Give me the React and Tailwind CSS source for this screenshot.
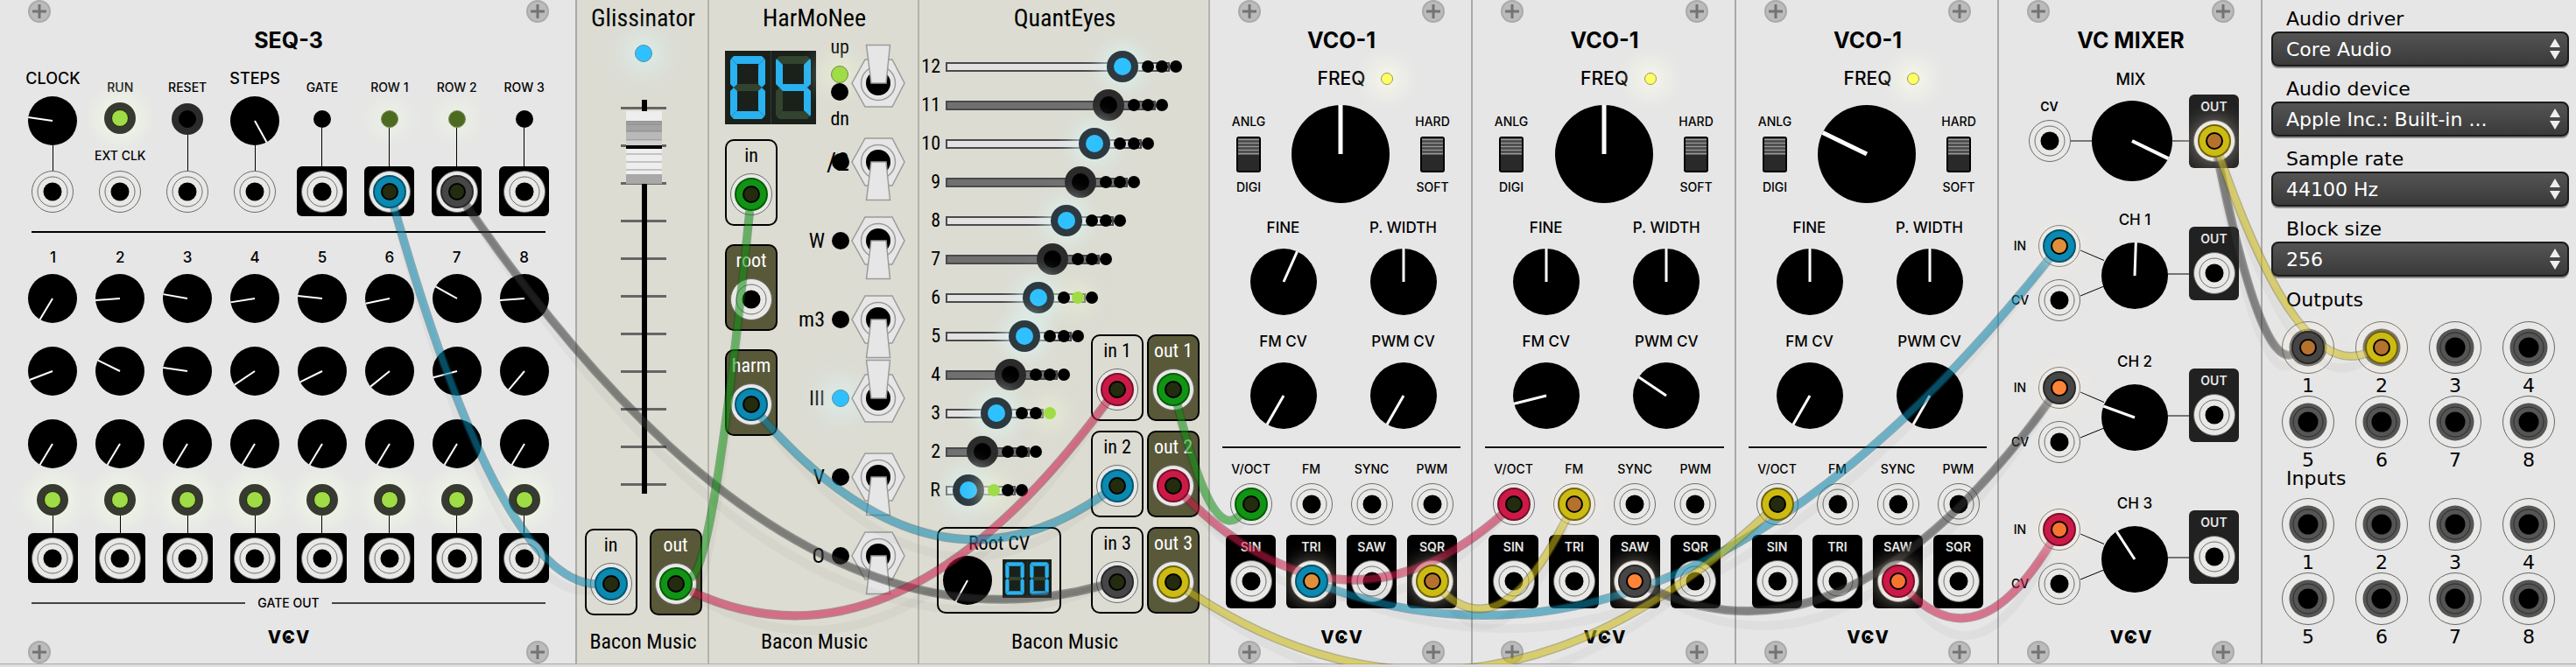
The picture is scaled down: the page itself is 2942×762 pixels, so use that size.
import React from 'react';

const NARROW = "font-['Liberation_Sans_Narrow','Roboto_Condensed','Liberation_Sans',sans-serif]";

const COLORS = {
  blue: ['#0b89b0', '#055570'],
  green: ['#119414', '#075c08'],
  pink: ['#cc1a47', '#7a0f2b'],
  yellow: ['#cdbb13', '#6f650a'],
  gray: ['#474646', '#2a2929'],
};

const CABLES = [
  ['blue', 445, 219, 698, 668],
  ['gray', 522, 219, 1276, 664],
  ['green', 773, 668, 858, 223],
  ['pink', 773, 668, 1276, 443],
  ['blue', 858, 463, 1276, 554],
  ['green', 1340, 443, 1428, 576],
  ['pink', 1340, 554, 1729, 576],
  ['blue', 1496, 664, 2352, 281],
  ['yellow', 1340, 664, 2030, 576],
  ['yellow', 1635, 664, 1797, 576],
  ['gray', 1867, 664, 2352, 442],
  ['pink', 2168, 664, 2352, 604],
  ['gray', 2529, 161, 2635, 397],
  ['yellow', 2529, 161, 2719, 397],
];

// A cable hangs from both plugs; longer cables sag further.
function cablePath([, x1, y1, x2, y2], extra) {
  const dist = Math.hypot(x2 - x1, y2 - y1);
  const cx = (x1 + x2) / 2;
  const cy = (y1 + y2) / 2 + 65 + 0.3 * dist + extra;
  const start = (x, y) => {
    const d = Math.hypot(cx - x, cy - y);
    return [x + ((cx - x) / d) * 18, y + ((cy - y) / d) * 18];
  };
  const [ax, ay] = start(x1, y1);
  const [bx, by] = start(x2, y2);
  return `M${ax} ${ay}Q${cx} ${cy} ${bx} ${by}`;
}

function Cables() {
  return (
    <svg
      className="pointer-events-none absolute inset-0 z-10 h-full w-full"
      viewBox="0 0 2942 759"
      preserveAspectRatio="none"
      fill="none"
      aria-hidden="true"
    >
      {CABLES.map((c, i) => (
        <g key={i}>
          <path d={cablePath(c, 40)} stroke="#000" strokeOpacity="0.03" strokeWidth="10" />
          <g opacity="0.56">
            <path d={cablePath(c, 0)} stroke={COLORS[c[0]][1]} strokeOpacity="0.75" strokeWidth="10" />
            <path d={cablePath(c, 0)} stroke={c[0] === 'gray' ? '#333' : COLORS[c[0]][0]} strokeWidth="7" />
          </g>
        </g>
      ))}
    </svg>
  );
}

function Plug({ color, core = '#242c10' }) {
  const [fill, edge] = COLORS[color];
  const hot = core !== '#242c10';
  return (
    <span
      className={
        'absolute inset-0 z-20 m-auto grid size-[38px] place-items-center rounded-full ' +
        (hot ? 'shadow-[0_0_20px_8px_rgba(255,240,220,0.35)]' : '')
      }
    >
      <svg className="size-[38px]" viewBox="0 0 38 38" aria-hidden="true">
        <circle cx="19" cy="19" r="18" fill={fill} stroke={edge} strokeWidth="2" />
        <circle cx="19" cy="19" r="9" fill={core} stroke="#000" strokeWidth="2" />
      </svg>
    </span>
  );
}

function Jack({ plug, core }) {
  return (
    <span className="relative block size-12 shrink-0">
      <svg className="size-12" viewBox="0 0 48 48" aria-hidden="true">
        <circle cx="24" cy="24" r="23.5" fill="#e8e8e6" stroke="#6c6c6c" />
        <circle cx="24" cy="24" r="17" fill="none" stroke="#6c6c6c" />
        <circle cx="24" cy="24" r="10.5" fill="#000" />
      </svg>
      {plug && <Plug color={plug} core={core} />}
    </span>
  );
}

function AudioJack({ plug, core }) {
  return (
    <span className="relative block size-[60px] shrink-0">
      <svg className="size-[60px]" viewBox="0 0 60 60" aria-hidden="true">
        <circle cx="30" cy="30" r="29.5" fill="#e8e8e7" stroke="#666" />
        <circle cx="30" cy="30" r="21.5" fill="#555" />
        <circle cx="30" cy="30" r="17" fill="none" stroke="#2a2a2a" />
        <circle cx="30" cy="30" r="11.5" fill="#000" />
      </svg>
      {plug && <Plug color={plug} core={core} />}
    </span>
  );
}

function Knob({ size, angle, label, width = 2 }) {
  const r = size / 2;
  return (
    <label className="relative block shrink-0 rounded-full">
      <svg width={size} height={size} viewBox={`0 0 ${size} ${size}`} aria-hidden="true">
        <circle cx={r} cy={r} r={r} fill="#000" />
        <line x1={r} y1={r} x2={r} y2="0" stroke="#fff" strokeWidth={width} transform={`rotate(${angle} ${r} ${r})`} />
      </svg>
      <input
        type="range"
        min="0"
        max="360"
        defaultValue={angle}
        aria-label={label}
        className="absolute inset-0 h-full w-full opacity-0"
      />
    </label>
  );
}

function PushButton({ on, label }) {
  return (
    <button
      aria-label={label}
      className={
        'grid size-9 shrink-0 place-items-center rounded-full ' +
        (on ? 'bg-[#373a30] shadow-[0_0_24px_10px_rgba(242,250,228,0.75)]' : 'bg-[#2b2b2b]')
      }
    >
      <span className={'size-5 rounded-full border ' + (on ? 'border-[#20260f] bg-[#9fdc45]' : 'border-black bg-black')} />
    </button>
  );
}

function Screw() {
  return (
    <svg className="size-[26px]" viewBox="0 0 26 26" aria-hidden="true">
      <circle cx="13" cy="13" r="12" fill="#bbb" stroke="#aaa" strokeWidth="2" />
      <path d="M13 5v16M5 13h16" stroke="#737373" strokeWidth="3" />
    </svg>
  );
}

function Logo() {
  return (
    <span className="flex h-5 items-center gap-px text-[20px] leading-5 font-extrabold">
      <span>V</span>
      <span className="relative">
        C
        <span className="absolute inset-0 m-auto size-[5px] rounded-full bg-black" />
      </span>
      <span>V</span>
    </span>
  );
}

function VcvModule({ title, children }) {
  return (
    <section className="flex flex-col bg-[#e6e6e6] font-['Inter',sans-serif] text-black shadow-[inset_-2px_-1px_0_#a9a9a9]">
      <div className="flex justify-between px-8">
        <Screw />
        <Screw />
      </div>
      <h2 className="h-10 text-center text-[25px] leading-10 font-bold">{title}</h2>
      {children}
      <div className="mt-auto mb-px flex h-10 items-start justify-between px-8">
        <span className="self-end"><Screw /></span>
        <Logo />
        <span className="self-end"><Screw /></span>
      </div>
    </section>
  );
}

function JackBox({ label, tone = 'bg-black text-[#e6e6e6]', plug, core }) {
  return (
    <div className={'flex h-[84px] w-[57px] shrink-0 flex-col items-center gap-[7px] rounded-md pt-1.5 ' + tone}>
      <span className="text-sm leading-4 font-semibold">{label}</span>
      <Jack plug={plug} core={core} />
    </div>
  );
}

function SquareJack({ plug }) {
  return (
    <div className="grid size-[57px] place-items-center rounded-md bg-black">
      <Jack plug={plug} />
    </div>
  );
}

const SMALL = 'text-sm leading-5 font-medium whitespace-nowrap';
const LARGE = 'text-[18px] leading-5 font-medium whitespace-nowrap';
const WIRE = 'w-px flex-1 bg-black';

function Seq3() {
  const rows = [
    [211, 266, 280, 261, 276, 258, 299, 266],
    [249, 296, 278, 236, 244, 231, 255, 220],
    [211, 211, 211, 211, 211, 211, 211, 211],
  ];
  const outs = [
    ['GATE', false],
    ['ROW 1', true, 'blue'],
    ['ROW 2', true, 'gray'],
    ['ROW 3', false],
  ];
  return (
    <VcvModule title="SEQ-3">
      <div className="mt-3.5 grid h-[167px] grid-cols-8 px-[22px]">
        <div className="flex flex-col items-center pb-1">
          <span className={LARGE}>CLOCK</span>
          <span className="mt-2.5"><Knob size={56} angle={278} label="Clock" /></span>
          <span className={WIRE} />
          <Jack />
        </div>
        <div className="flex flex-col items-center justify-between pt-2.5 pb-1">
          <span className={SMALL}>RUN</span>
          <PushButton on label="Run" />
          <span className={SMALL + ' mt-2'}>EXT CLK</span>
          <Jack />
        </div>
        <div className="flex flex-col items-center pt-2.5 pb-1">
          <span className={SMALL}>RESET</span>
          <span className="mt-2"><PushButton label="Reset" /></span>
          <span className={WIRE} />
          <Jack />
        </div>
        <div className="flex flex-col items-center pb-1">
          <span className={LARGE}>STEPS</span>
          <span className="mt-2.5"><Knob size={56} angle={151} label="Steps" /></span>
          <span className={WIRE} />
          <Jack />
        </div>
        {outs.map(([name, on, plug]) => (
          <div key={name} className="flex flex-col items-center pt-2.5">
            <span className={SMALL}>{name}</span>
            <span
              className={
                'mt-4 size-5 rounded-full ' +
                (on ? 'border border-[#7b8a5a] bg-[#4c6b21] shadow-[0_0_24px_12px_rgba(240,246,228,0.6)]' : 'bg-black')
              }
            />
            <span className={WIRE} />
            <SquareJack plug={plug} />
          </div>
        ))}
      </div>
      <div className="mx-9 mt-[17px] h-0.5 bg-black" />
      <div className="mt-4 grid grid-cols-8 px-[22px] text-center text-[17px] leading-6 font-medium">
        {[1, 2, 3, 4, 5, 6, 7, 8].map((n) => <span key={n}>{n}</span>)}
      </div>
      <div className="mt-[7px] flex flex-col gap-[27px]">
        {rows.map((row, r) => (
          <div key={r} className="grid grid-cols-8 justify-items-center px-[22px]">
            {row.map((a, i) => <Knob key={i} size={56} angle={a} label={`Row ${r + 1} step ${i + 1}`} />)}
          </div>
        ))}
      </div>
      <div className="mt-[18px] grid grid-cols-8 px-[22px]">
        {[1, 2, 3, 4, 5, 6, 7, 8].map((n) => (
          <div key={n} className="flex h-[113px] flex-col items-center">
            <PushButton on label={`Gate ${n}`} />
            <span className={WIRE} />
            <SquareJack />
          </div>
        ))}
      </div>
      <div className="mx-9 mt-[13px] mb-[19px] flex items-center gap-3.5">
        <span className="h-0.5 flex-1 bg-[#444]" />
        <span className={SMALL}>GATE OUT</span>
        <span className="h-0.5 flex-1 bg-[#444]" />
      </div>
    </VcvModule>
  );
}

function BaconModule({ title, children }) {
  return (
    <section className={'flex flex-col bg-[#dcdcd3] text-black shadow-[inset_-2px_-1px_0_#b3b3ab] ' + NARROW}>
      <h2 className="h-[42px] text-center text-[28px] leading-[42px]">{title}</h2>
      {children}
      <footer className="mt-auto h-[42px] text-center text-2xl leading-8">Bacon Music</footer>
    </section>
  );
}

function BaconJack({ label, dark, plug }) {
  return (
    <div
      className={
        'flex h-[99px] w-[60px] shrink-0 flex-col items-center gap-1.5 rounded-[10px] border-2 border-black pt-[3px] ' +
        (dark ? 'bg-[#59593a] text-white' : '')
      }
    >
      <span className="text-[22px] leading-7 whitespace-nowrap">{label}</span>
      <Jack plug={plug} />
    </div>
  );
}

function Glissinator() {
  return (
    <BaconModule title="Glissinator">
      <div className="flex flex-col items-center pt-[9px]">
        <span className="size-5 rounded-full border border-[#5b8ea3] bg-[#2fc1ff] shadow-[0_0_28px_12px_rgba(220,243,240,0.8)]" />
        <label className="relative mt-[43px] block">
          <svg width="52" height="450" viewBox="0 0 52 450" aria-hidden="true">
            {Array.from({ length: 11 }, (_, i) => (
              <rect key={i} x="0" y={8 + i * 43} width="52" height="3" fill="#666" />
            ))}
            <rect x="24" y="0" width="6" height="450" fill="#000" />
            <rect x="6" y="13" width="41" height="83" fill="#eee" />
            <rect x="6" y="24" width="41" height="12" fill="#a3a3a3" />
            <rect x="6" y="36" width="41" height="10" fill="#b9b9b9" />
            <path d="M6 25h41M6 28h41M6 36h41M6 46h41" stroke="#8a8a8a" />
            <rect x="6" y="47" width="41" height="5" fill="#d0d0d0" />
            <rect x="6" y="52" width="41" height="4" fill="#000" />
            <path d="M6 62h41M6 71h41M6 80h41" stroke="#999" />
            <rect x="6" y="85" width="41" height="11" fill="#a8a8a8" />
          </svg>
          <input
            type="range"
            min="0"
            max="100"
            defaultValue="90"
            aria-label="Glide"
            className="absolute inset-0 h-full w-full opacity-0"
          />
        </label>
        <div className="mt-10 flex gap-3.5">
          <BaconJack label="in" plug="blue" />
          <BaconJack label="out" dark plug="green" />
        </div>
      </div>
    </BaconModule>
  );
}

const SEGMENTS = {
  a: '10,6 42,6 45,9 39,15 13,15 7,9',
  b: '46,11 45,9 38,16 38,39 42,42 46,38',
  c: '46,46 42,42 38,45 38,68 45,75 46,73',
  d: '10,78 42,78 45,75 39,69 13,69 7,75',
  e: '6,46 10,42 14,45 14,68 7,75 6,73',
  f: '6,11 7,9 14,16 14,39 10,42 6,38',
  g: '10,42 14,38 38,38 42,42 38,46 14,46',
};
const LIT = { 0: 'abcdef', 4: 'bcfg' };

function Display({ value, className }) {
  return (
    <svg className={'shrink-0 ' + className} viewBox="0 0 104 84" preserveAspectRatio="none" role="img" aria-label={value}>
      <rect width="104" height="84" fill="#1a211b" />
      <path d="M52.5 0v84" stroke="#333a33" />
      {value.split('').map((digit, i) => (
        <g key={i} transform={`translate(${i * 52} 0)`}>
          {Object.entries(SEGMENTS).map(([name, points]) => (
            <polygon key={name} points={points} fill={LIT[digit].includes(name) ? '#29b1f0' : '#32432f'} />
          ))}
        </g>
      ))}
    </svg>
  );
}

function Toggle({ up, label }) {
  return (
    <label className="relative block shrink-0">
      <svg width="62" height="90" viewBox="0 0 62 90" aria-hidden="true">
        <g fill="#e6e6e6" stroke="#9b9b9b" strokeWidth="1.5">
          <polygon points="1,45 16,18 47,18 61,45 47,72 16,72" />
          <circle cx="31" cy="45" r="19.5" />
          <circle cx="31" cy="45" r="14" fill="#000" stroke="none" />
          <polygon points={up ? '17.5,1.5 44.5,1.5 40,45 23,45' : '23,45 40,45 44.5,88.5 17.5,88.5'} />
        </g>
      </svg>
      <input type="checkbox" defaultChecked={up} aria-label={label} className="absolute inset-0 h-full w-full opacity-0" />
    </label>
  );
}

function HarMoNee() {
  const rows = [['/2'], ['W'], ['m3'], ['III', true], ['V'], ['O']];
  return (
    <BaconModule title="HarMoNee">
      <div className="flex pt-2 pr-4 pl-[18px]">
        <div className="flex w-[60px] shrink-0 flex-col pt-2">
          <Display value="04" className="h-[84px] w-[104px]" />
          <div className="mt-[17px] flex flex-col gap-[21px]">
            <BaconJack label="in" plug="green" />
            <BaconJack label="root" dark />
            <BaconJack label="harm" dark plug="blue" />
          </div>
        </div>
        <div className="flex flex-1 flex-col text-[22px]">
          <div className="flex h-[90px] items-center justify-end gap-0.5">
            <div className="flex flex-col items-center">
              <span className="leading-[26px]">up</span>
              <span className="mt-2 size-5 rounded-full border border-[#6f8a4a] bg-[#9fdc45] shadow-[0_0_24px_12px_rgba(238,243,212,0.6)]" />
              <span className="size-5 rounded-full bg-black" />
              <span className="mt-2 leading-[26px]">dn</span>
            </div>
            <Toggle up label="Up or down" />
          </div>
          {rows.map(([name, on]) => (
            <div key={name} className="flex h-[90px] items-center justify-end gap-0.5">
              <span className={name === '/2' ? '-mr-[22px] text-3xl' : 'mr-1.5 text-2xl'}>{name}</span>
              <span
                className={
                  'size-5 rounded-full ' +
                  (on ? 'border border-[#5b8ea3] bg-[#2fc1ff] shadow-[0_0_28px_12px_rgba(220,243,240,0.8)]' : 'bg-black')
                }
              />
              <Toggle up={on} label={name} />
            </div>
          ))}
        </div>
      </div>
    </BaconModule>
  );
}

function QuantEyes() {
  const names = ['12', '11', '10', '9', '8', '7', '6', '5', '4', '3', '2', 'R'];
  const lit = { 12: 1, 10: 1, 8: 1, 6: 1, 5: 1, 3: 1, R: 1 };
  const green = { 6: 1, 3: 2, R: 0 };
  return (
    <BaconModule title="QuantEyes">
      <div className="grid pt-3">
        <div className="col-start-1 row-start-1 flex flex-col">
          {names.map((name, i) => (
            <div key={name} className="flex h-11 items-center">
              <span className="w-6 text-right text-[22px] leading-8">{name}</span>
              <div
                className={
                  'ml-1.5 flex h-[11px] items-center justify-end border-2 border-[#4a4a4c] ' +
                  (lit[name] ? 'bg-[#e2e2e2]' : 'bg-[#707070]')
                }
                style={{ width: 256 - i * 16 }}
              >
                <button
                  aria-label={`Note ${name}`}
                  className={
                    'grid size-9 shrink-0 place-items-center rounded-full ' +
                    (lit[name] ? 'bg-[#2d3940] shadow-[0_0_20px_8px_rgba(220,243,240,0.7)]' : 'bg-[#2b2b2b]')
                  }
                >
                  <span className={'size-5 rounded-full ' + (lit[name] ? 'bg-[#2fc1ff]' : 'bg-black')} />
                </button>
                <div className="-mr-4 ml-1 flex gap-0.5">
                  {[0, 1, 2].map((d) => (
                    <span
                      key={d}
                      className={
                        'size-3.5 rounded-full ' +
                        (green[name] === d
                          ? 'bg-[#9fdc45] shadow-[0_0_20px_12px_rgba(238,243,212,0.5)]'
                          : 'relative bg-black')
                      }
                    />
                  ))}
                </div>
              </div>
            </div>
          ))}
          <div className="mt-5 ml-5 flex h-[99px] w-[142px] flex-col rounded-[10px] border-2 border-black">
            <span className="pt-[3px] text-center text-[22px] leading-7">Root CV</span>
            <div className="flex items-center gap-3 pl-[5px]">
              <Knob size={56} angle={209} label="Root CV" />
              <Display value="00" className="-mt-1 h-11 w-14" />
            </div>
          </div>
        </div>
        <div className="col-start-1 row-start-1 grid grid-cols-2 gap-x-1 gap-y-[11px] self-end justify-self-end pr-3">
          <BaconJack label="in 1" plug="pink" />
          <BaconJack label="out 1" dark plug="green" />
          <BaconJack label="in 2" plug="blue" />
          <BaconJack label="out 2" dark plug="pink" />
          <BaconJack label="in 3" plug="gray" />
          <BaconJack label="out 3" dark plug="yellow" />
        </div>
      </div>
    </BaconModule>
  );
}

function SlideSwitch({ top, bottom }) {
  return (
    <label className="relative flex w-[50px] flex-col items-center gap-[9px] text-sm leading-4 font-medium">
      <span>{top}</span>
      <svg width="28" height="41" viewBox="0 0 28 41" aria-hidden="true">
        <rect width="28" height="41" rx="3" fill="#000" />
        <rect x="2" y="2" width="24" height="37" fill="#292929" />
        <path d="M2 3.5h24M2 7.5h24M2 11.5h24M2 15.5h24M2 19.5h24" stroke="#999" strokeWidth="2" />
        <path d="M2 5.5h24M2 9.5h24M2 13.5h24M2 17.5h24" stroke="#4a4a4a" strokeWidth="2" />
      </svg>
      <span>{bottom}</span>
      <input type="checkbox" defaultChecked className="absolute inset-0 h-full w-full opacity-0" />
    </label>
  );
}

function Vco({ freq = 0, fine = 0, fm = 210, pwm = 210, ins = {}, outs = {} }) {
  const knobs = [
    ['FINE', fine],
    ['P. WIDTH', 0],
    ['FM CV', fm],
    ['PWM CV', pwm],
  ];
  return (
    <VcvModule title="VCO-1">
      <div className="mt-2.5 flex h-7 items-center justify-center gap-[18px] pl-8">
        <span className="text-[21px] leading-7 font-medium">FREQ</span>
        <span className="size-3.5 rounded-full border border-[#99994d] bg-[#ffff66] shadow-[0_0_24px_12px_rgba(252,252,236,0.8)]" />
      </div>
      <div className="mt-4 flex items-center justify-between pr-[21px] pl-[19px]">
        <SlideSwitch top="ANLG" bottom="DIGI" />
        <Knob size={112} angle={freq} width={5} label="Frequency" />
        <SlideSwitch top="HARD" bottom="SOFT" />
      </div>
      <div className="mt-[18px] grid grid-cols-2 gap-y-5 pr-[11px] pl-[15px]">
        {knobs.map(([name, a]) => (
          <div key={name} className="flex flex-col items-center gap-3.5">
            <span className="text-[17px] leading-5 font-medium">{name}</span>
            <Knob size={76} angle={a} width={3} label={name} />
          </div>
        ))}
      </div>
      <div className="mx-3.5 mt-5 h-0.5 bg-[#111]" />
      <div className="mt-4 grid grid-cols-4 justify-items-center gap-y-[11px] px-3">
        {['V/OCT', 'FM', 'SYNC', 'PWM'].map((name) => (
          <div key={name} className="flex flex-col items-center gap-2">
            <span className="text-sm leading-4 font-medium">{name}</span>
            <Jack plug={ins[name]?.[0]} core={ins[name]?.[1]} />
          </div>
        ))}
        {['SIN', 'TRI', 'SAW', 'SQR'].map((name) => (
          <JackBox key={name} label={name} plug={outs[name]?.[0]} core={outs[name]?.[1]} />
        ))}
      </div>
    </VcvModule>
  );
}

function Channel({ n, angle, plug, core }) {
  return (
    <div className="relative flex h-[162px] items-start justify-between pr-[27px] pl-2.5">
      <svg className="absolute inset-0 h-full w-full" viewBox="0 0 301 162" preserveAspectRatio="none" aria-hidden="true">
        <path d="M93 57L120 68.500M93 109L120 98M191 84H218" stroke="#000" />
      </svg>
      <div className="flex flex-col gap-3.5 pt-7 text-sm font-medium">
        <div className="flex items-center gap-[7px]">
          <span className="w-7 text-center">IN</span>
          <Jack plug={plug} core={core} />
        </div>
        <div className="flex items-center gap-[7px]">
          <span className="w-7 text-center">CV</span>
          <Jack />
        </div>
      </div>
      <div className="flex w-[76px] flex-col items-center gap-4 pt-3">
        <span className="text-[17px] leading-5 font-medium">CH {n}</span>
        <Knob size={76} angle={angle} width={3} label={`Channel ${n} level`} />
      </div>
      <div className="relative pt-[30px]">
        <JackBox label="OUT" tone="bg-[#212121] text-[#e6e6e6]" />
      </div>
    </div>
  );
}

function Mixer() {
  return (
    <VcvModule title="VC MIXER">
      <div className="mt-[15px] text-center text-[18px] leading-5 font-medium">MIX</div>
      <div className="relative mt-[7px] flex items-start justify-between pr-[27px] pl-[29px]">
        <span className="absolute top-[52px] right-20 left-[81px] h-0.5 bg-[#777]" />
        <JackBox label="CV" tone="" />
        <span className="mt-[7px]"><Knob size={92} angle={116} width={4} label="Mix level" /></span>
        <div className="relative">
          <JackBox label="OUT" tone="bg-[#212121] text-[#e6e6e6]" plug="yellow" core="#b5722e" />
        </div>
      </div>
      <div className="mt-[22px]">
        <Channel n={1} angle={2} plug="blue" core="#e0903a" />
        <Channel n={2} angle={290} plug="gray" core="#ff8438" />
        <Channel n={3} angle={327} plug="pink" core="#f57530" />
      </div>
    </VcvModule>
  );
}

function Choice({ id, label, value, first }) {
  return (
    <div className="flex flex-col">
      <label htmlFor={id} className={'flex items-end pl-[17px] leading-7 ' + (first ? 'h-9' : 'h-10')}>
        {label}
      </label>
      <div className="relative">
        <select
          id={id}
          className="h-10 w-full appearance-none rounded-lg border-2 border-[#1b1b1b] bg-linear-to-b from-[#545454] to-[#3a3a3a] pl-[15px] text-white shadow-[0_2px_0_#8f8f8f]"
        >
          <option>{value}</option>
        </select>
        <svg className="pointer-events-none absolute top-2 right-2.5" width="12" height="24" viewBox="0 0 12 24" aria-hidden="true">
          <path d="M6 0l6 10H0zM6 24l6-10H0z" fill="#eee" />
        </svg>
      </div>
    </div>
  );
}

function JackGrid({ plugs = {} }) {
  return (
    <div className="grid grid-cols-4 pr-1">
      {[1, 2, 3, 4, 5, 6, 7, 8].map((n) => (
        <div key={n} className="flex flex-col items-center">
          <AudioJack plug={plugs[n]?.[0]} core={plugs[n]?.[1]} />
          <span className="h-[25px] leading-7">{n}</span>
        </div>
      ))}
    </div>
  );
}

function Audio() {
  return (
    <section className="flex flex-col bg-[#e6e6e6] px-2 pl-2.5 font-['DejaVu_Sans',sans-serif] text-[22px] text-black shadow-[inset_0_-1px_0_#a9a9a9]">
      <Choice id="driver" label="Audio driver" value="Core Audio" first />
      <Choice id="device" label="Audio device" value="Apple Inc.: Built-in ..." />
      <Choice id="rate" label="Sample rate" value="44100 Hz" />
      <Choice id="block" label="Block size" value="256" />
      <h3 className="mt-[13px] pl-[17px] leading-7">Outputs</h3>
      <div className="mt-2.5">
        <JackGrid plugs={{ 1: ['gray', '#b5722e'], 2: ['yellow', '#b5722e'] }} />
      </div>
      <h3 className="-mt-0.5 pl-[17px] leading-6">Inputs</h3>
      <div className="mt-2.5">
        <JackGrid />
      </div>
    </section>
  );
}

export default function App() {
  return (
    <main className="bg-[#dddddd] pb-[3px]">
      <div className="relative overflow-hidden">
        <div className="grid grid-cols-[659fr_151fr_240fr_332fr_300fr_301fr_300fr_301fr_358fr]">
          <Seq3 />
          <Glissinator />
          <HarMoNee />
          <QuantEyes />
          <Vco fine={24} ins={{ 'V/OCT': ['green'] }} outs={{ TRI: ['blue', '#e0903a'], SQR: ['yellow', '#b5722e'] }} />
          <Vco fm={256} pwm={304} ins={{ 'V/OCT': ['pink'], FM: ['yellow', '#b5722e'] }} outs={{ SAW: ['gray', '#ff8438'] }} />
          <Vco freq={296} ins={{ 'V/OCT': ['yellow'] }} outs={{ SAW: ['pink', '#f57530'] }} />
          <Mixer />
          <Audio />
        </div>
        <Cables />
      </div>
    </main>
  );
}
